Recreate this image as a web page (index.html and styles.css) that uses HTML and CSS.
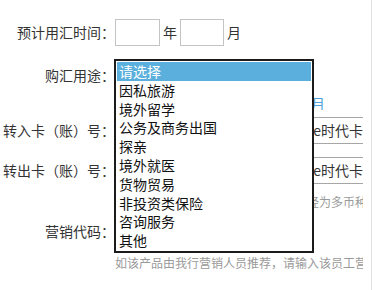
FILE: index.html
```html
<!DOCTYPE html>
<html lang="zh-CN">
<head>
<meta charset="utf-8">
<title>购汇申请</title>
<link rel="stylesheet" href="styles.css">
</head>
<body>
<div class="panel">
  <form class="form">
    <div class="row row-time">
      <label class="label">预计用汇时间<span class="colon">：</span></label>
      <div class="field">
        <span class="box time-input"></span>
        <span class="unit">年</span>
        <span class="box time-input"></span>
        <span class="unit">月</span>
      </div>
    </div>

    <div class="row row-purpose">
      <label class="label">购汇用途<span class="colon">：</span></label>
      <div class="field field-anchor">
        <div class="sel sel-purpose"></div>
        <ul class="dropdown">
          <li class="opt opt-active">请选择</li>
          <li class="opt">因私旅游</li>
          <li class="opt">境外留学</li>
          <li class="opt">公务及商务出国</li>
          <li class="opt">探亲</li>
          <li class="opt">境外就医</li>
          <li class="opt">货物贸易</li>
          <li class="opt">非投资类保险</li>
          <li class="opt">咨询服务</li>
          <li class="opt">其他</li>
        </ul>
      </div>
    </div>

    <div class="note-row">
      <div class="note">可选期限：1—12个月</div>
    </div>

    <div class="row row-in">
      <label class="label">转入卡（账）号<span class="colon">：</span></label>
      <div class="field">
        <div class="sel sel-card">6217 **** **** 3958 长城e时代卡</div>
      </div>
    </div>

    <div class="row row-out">
      <label class="label">转出卡（账）号<span class="colon">：</span></label>
      <div class="field">
        <div class="sel sel-card">6217 **** **** 3958 长城e时代卡</div>
      </div>
    </div>

    <div class="hint-row hint-first">
      <div class="hint">温馨提示：请确保所选银行卡账户已经为多币种账户</div>
    </div>

    <div class="row row-code">
      <label class="label">营销代码<span class="colon">：</span></label>
      <div class="field">
        <span class="box code-input"></span>
      </div>
    </div>

    <div class="hint-row hint-second">
      <div class="hint">如该产品由我行营销人员推荐，请输入该员工营销代码</div>
    </div>
  </form>
</div>
</body>
</html>
```

FILE: styles.css
```css
html, body {
  margin: 0;
  padding: 0;
  background: #ffffff;
}

body {
  font-family: "Noto Sans CJK SC", "Noto Sans", sans-serif;
  font-size: 14px;
  color: #333333;
}

.panel {
  width: 371px;
  height: 290px;
  border-right: 1px solid #e2e2e2;
  overflow: hidden;
}

.form {
  margin: 0;
  padding-top: 19px;
}

.row {
  display: flex;
  align-items: center;
  height: 27px;
}

.label {
  flex: none;
  width: 115px;
  text-align: right;
  line-height: 27px;
  white-space: nowrap;
  color: #333333;
}

.colon {
  font-family: "Noto Sans CJK TC", "Noto Sans CJK SC", sans-serif;
}

.field {
  flex: none;
  width: 248px;
  height: 27px;
  display: flex;
  align-items: center;
}

.field-anchor {
  position: relative;
}

.box {
  display: block;
  box-sizing: border-box;
  height: 27px;
  border: 1px solid #c4c4c4;
  background: #fff;
}

.time-input {
  width: 45px;
}

.time-input + .unit + .time-input {
  width: 44px;
}

.unit {
  margin: 0 3px 0 3px;
  line-height: 27px;
  color: #333;
}

.code-input {
  width: 150px;
}

.row-purpose {
  margin-top: 16px;
}

.sel {
  box-sizing: border-box;
  height: 27px;
  width: 248px;
  line-height: 25px;
  border: 1px solid #a6a6a6;
  border-right: none;
  white-space: nowrap;
  overflow: hidden;
  text-align: right;
  color: #333;
}

.sel-purpose {
  width: 199px;
}

.dropdown {
  position: absolute;
  z-index: 10;
  left: -1px;
  top: -3px;
  box-sizing: border-box;
  width: 200px;
  height: 194px;
  margin: 0;
  padding: 1px;
  list-style: none;
  background: #ffffff;
  border: 2px solid #1b1b1b;
}

.opt {
  height: 18.8px;
  line-height: 18.8px;
  padding-left: 2px;
  color: #111111;
  white-space: nowrap;
}

.opt-active {
  background: #5aafdc;
  color: #ffffff;
}

.note-row {
  margin-top: 7px;
  padding-left: 115px;
  height: 14px;
}

.note {
  width: 210px;
  text-align: right;
  line-height: 14px;
  color: #4da2dc;
  white-space: nowrap;
  overflow: hidden;
}

.row-in {
  margin-top: 7px;
}

.row-out {
  margin-top: 13px;
}

.hint-row {
  padding-left: 115px;
  height: 12px;
}

.hint {
  width: 248px;
  font-size: 12px;
  line-height: 12px;
  color: #9a9a9a;
  white-space: nowrap;
  overflow: hidden;
}

.hint-first {
  margin-top: 12px;
}

.row-code {
  margin-top: 10px;
}

.hint-second {
  margin-top: 12px;
}
```
